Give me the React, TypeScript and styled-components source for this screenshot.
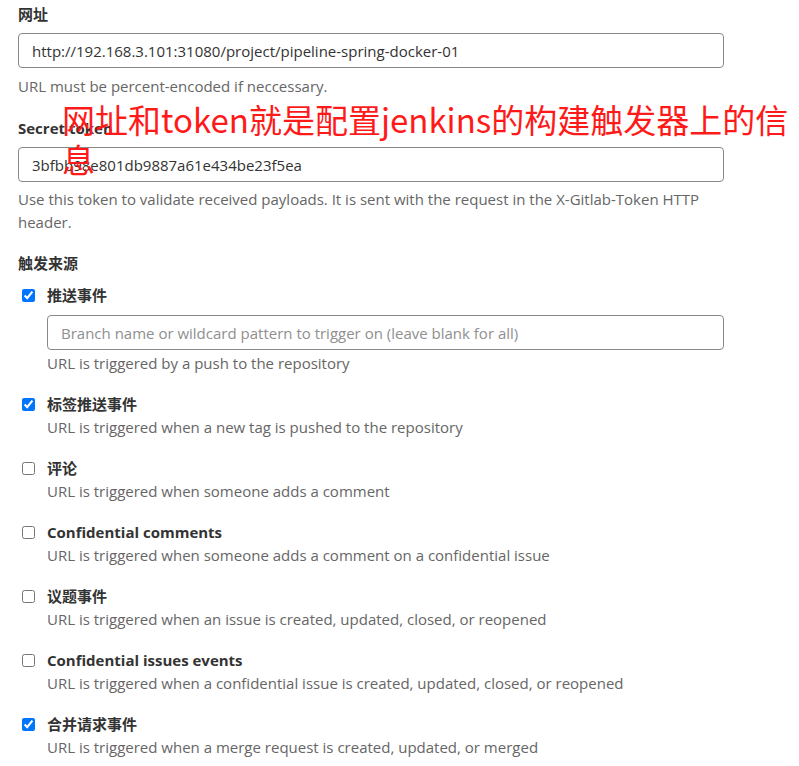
import React from 'react';
import styled, { createGlobalStyle } from 'styled-components';

const GlobalStyle = createGlobalStyle`
  body {
    margin: 0;
    background: #ffffff;
    font-family: 'Open Sans', 'Noto Sans CJK SC', sans-serif;
    color: #333333;
  }
`;

const Page = styled.div`
  position: relative;
  width: 799px;
  height: 766px;
  overflow: hidden;
  padding: 4px 0 0 18px;
  box-sizing: border-box;
`;

const Group = styled.div`
  width: 706px;
  margin-bottom: ${(p: { $gap?: number }) => p.$gap ?? 21}px;
`;

const Label = styled.div`
  font-size: 15px;
  font-weight: 700;
  line-height: 20px;
  color: #333333;
  margin-bottom: 9px;
`;

const TextInput = styled.input`
  display: block;
  width: 100%;
  height: 35px;
  box-sizing: border-box;
  padding: 0 13px;
  border: 1px solid #898989;
  border-radius: 4px;
  font-family: inherit;
  font-size: 15px;
  color: #333333;
  background: #ffffff;
  outline: none;

  &::placeholder {
    color: #8f8f8f;
  }
`;

const Help = styled.div`
  font-size: 15px;
  line-height: ${(p: { $lh?: number }) => p.$lh ?? 22}px;
  color: #666666;
  margin-top: ${(p: { $top?: number }) => p.$top ?? 7}px;
`;

const SectionTitle = styled.div`
  font-size: 15px;
  font-weight: 700;
  line-height: 20px;
  margin-bottom: 12px;
`;

const Trigger = styled.div`
  display: grid;
  grid-template-columns: 29px 1fr;
  width: 706px;
  margin-bottom: 20px;
`;

const Check = styled.input`
  margin: 4px 0 0 4px;
  width: 13px;
  height: 13px;
  accent-color: #0075ff;
`;

const TriggerBody = styled.div`
  display: flex;
  flex-direction: column;
`;

const TriggerLabel = styled.label`
  font-size: 15px;
  font-weight: 700;
  line-height: 20px;
  color: #333333;
`;

const BranchInput = styled(TextInput)`
  margin-top: 10px;
`;

const Note = styled.div`
  position: absolute;
  left: 62px;
  top: 99px;
  width: 732px;
  font-family: 'Noto Sans CJK SC', sans-serif;
  font-size: 33px;
  line-height: 40px;
  color: #ff1a1a;
  pointer-events: none;
`;

type Item = { label: string; help: string; checked: boolean; branch?: boolean };

const items: Item[] = [
  { label: '推送事件', help: 'URL is triggered by a push to the repository', checked: true, branch: true },
  { label: '标签推送事件', help: 'URL is triggered when a new tag is pushed to the repository', checked: true },
  { label: '评论', help: 'URL is triggered when someone adds a comment', checked: false },
  { label: 'Confidential comments', help: 'URL is triggered when someone adds a comment on a confidential issue', checked: false },
  { label: '议题事件', help: 'URL is triggered when an issue is created, updated, closed, or reopened', checked: false },
  { label: 'Confidential issues events', help: 'URL is triggered when a confidential issue is created, updated, closed, or reopened', checked: false },
  { label: '合并请求事件', help: 'URL is triggered when a merge request is created, updated, or merged', checked: true },
];

const App = () => {
  return (
    <Page>
      <GlobalStyle />
      <Group>
        <Label>网址</Label>
        <TextInput defaultValue="http://192.168.3.101:31080/project/pipeline-spring-docker-01" />
        <Help>URL must be percent-encoded if neccessary.</Help>
      </Group>
      <Group $gap={19}>
        <Label>Secret token</Label>
        <TextInput defaultValue="3bfbb98e801db9887a61e434be23f5ea" />
        <Help $lh={23} $top={6}>
          Use this token to validate received payloads. It is sent with the request in the X-Gitlab-Token HTTP header.
        </Help>
      </Group>
      <SectionTitle>触发来源</SectionTitle>
      {items.map((it) => (
        <Trigger key={it.label}>
          <Check type="checkbox" defaultChecked={it.checked} />
          <TriggerBody>
            <TriggerLabel>{it.label}</TriggerLabel>
            {it.branch && (
              <BranchInput placeholder="Branch name or wildcard pattern to trigger on (leave blank for all)" />
            )}
            <Help $top={2}>{it.help}</Help>
          </TriggerBody>
        </Trigger>
      ))}
      <Note>网址和token就是配置jenkins的构建触发器上的信息</Note>
    </Page>
  );
};

export default App;
